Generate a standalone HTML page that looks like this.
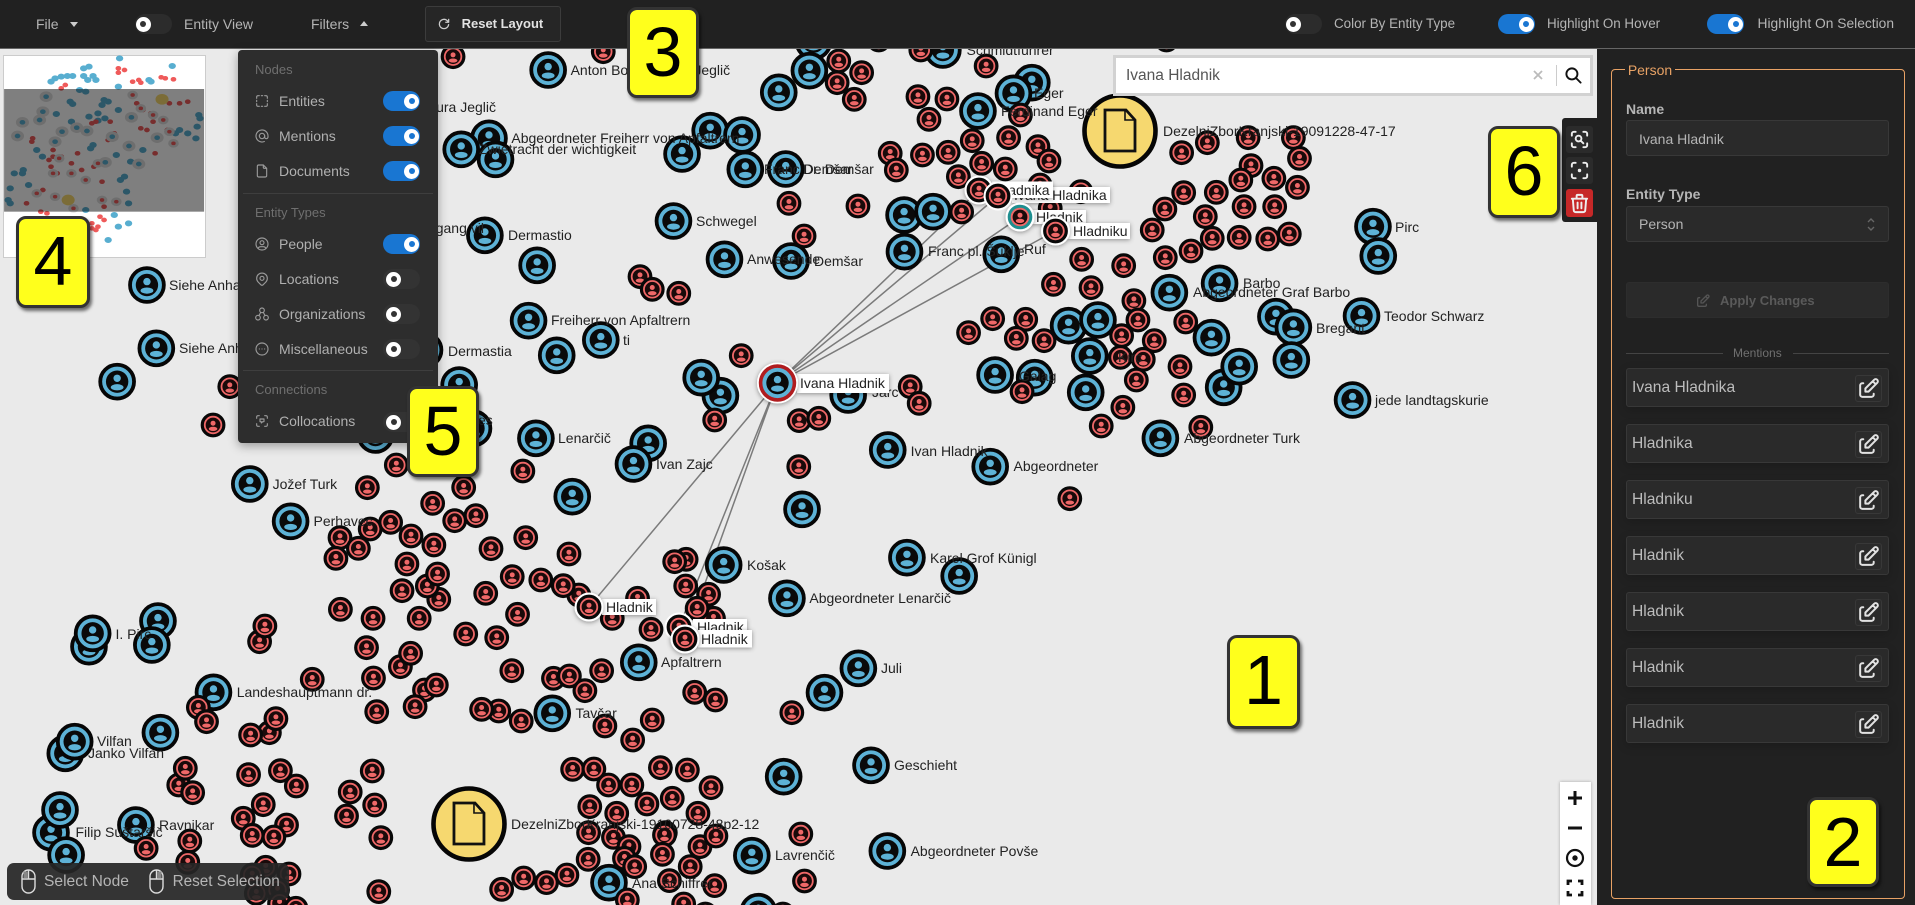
<!DOCTYPE html>
<html><head><meta charset="utf-8"><title>Graph</title>
<style>
*{box-sizing:border-box}
html,body{margin:0;padding:0;width:1915px;height:905px;overflow:hidden;background:#eaeaea;font-family:"Liberation Sans",sans-serif}
.a{position:absolute}
.tx{position:absolute;font-size:14px;line-height:16px;color:#b5b5b5;white-space:nowrap}
#tb{left:0;top:0;width:1915px;height:49px;background:#212121;border-bottom:1px solid #666}
.tg{position:absolute;width:37px;height:20px;border-radius:10px;background:#2c2c2c}
#fp .tg{background:#333}
#fp .tg.on{background:#1976d2}
.tg.on{background:#1976d2}
.tg i{position:absolute;top:2.5px;left:0;width:15px;height:15px;border-radius:50%;background:#fff}
.tg.off i{left:3px}
.tg.on i{left:21px}
.tg i:after{content:"";position:absolute;left:4.5px;top:4.5px;width:6px;height:6px;border-radius:50%;background:#333}
.tg.on i:after{background:#1976d2}
.car{position:absolute;width:0;height:0;border-left:4px solid transparent;border-right:4px solid transparent}
#fp{left:238px;top:50px;width:200px;height:393px;background:#2d2d2d;border-radius:4px;box-shadow:0 3px 10px rgba(0,0,0,.35)}
.hd{position:absolute;left:17px;font-size:13px;line-height:16px;color:#6f6f6f}
.rw{position:absolute;left:41px;font-size:14px;line-height:16px;color:#b0b0b0}
.ln{position:absolute;left:5px;width:190px;height:1px;background:#3e3e3e}
.fi{position:absolute;left:16px;width:16px;height:16px;margin-top:1px;fill:none;stroke:#9a9a9a;stroke-width:1.7;stroke-linecap:round;stroke-linejoin:round}
.n{position:absolute;width:72px;height:91px;background:#ffff1c;border:3px solid #333;border-radius:10px;box-shadow:2px 3px 3px rgba(0,0,0,.55);font-size:70px;line-height:85px;text-align:center;color:#000}
#sb{left:1597px;top:49px;width:318px;height:856px;background:#212121}
.lb{position:absolute;left:1626px;font-size:14px;font-weight:bold;line-height:16px;color:#b5b5b5}
.in{position:absolute;left:1626px;width:263px;height:36px;background:#2a2a2a;border:1px solid #383838;border-radius:3px}
.mr{position:absolute;left:1626px;width:263px;height:39px;background:#2a2a2a;border:1px solid #383838;border-radius:3px;box-shadow:0 3px 10px rgba(0,0,0,.18)}
.mr span{position:absolute;left:5px;top:10px;font-size:15.6px;line-height:18px;color:#bdbdbd;white-space:nowrap}
.mr b{position:absolute;right:6px;top:6px;width:27px;height:27px;border:1px solid #383838;border-radius:3px;background:#2b2b2b}
.mr svg{position:absolute;left:0;top:0;width:25px;height:25px;fill:none;stroke:#e2e2e2;stroke-width:1.9;stroke-linecap:round;stroke-linejoin:round}
.ib{position:absolute;left:1566px;width:27px;height:27px;background:#2b2b2b;border-radius:3px}
.ib svg{position:absolute;left:2px;top:2px;width:23px;height:23px;fill:none;stroke:#eee;stroke-width:2;stroke-linecap:round;stroke-linejoin:round}
.z{position:absolute;left:1560px;width:30px;height:30px}
.z svg{position:absolute;left:3px;top:3px;width:24px;height:24px;fill:none;stroke:#111;stroke-width:2.2}
svg text{font-family:"Liberation Sans",sans-serif;font-size:14px;fill:#222}
</style></head><body>

<svg class="a" style="left:0;top:0" width="1597" height="905" viewBox="0 0 1597 905">
<defs>
<g id="b" transform="scale(2.45,3)"><circle r="16.9" fill="#5db2d6" stroke="#060606" stroke-width="3.8"/><circle r="11.2" fill="#0a0a0a"/><circle cy="-3.4" r="3.7" fill="#5db2d6"/><ellipse cy="5.6" rx="6.4" ry="3.1" fill="#5db2d6"/></g>
<g id="r" transform="scale(2.45,3)"><circle r="10.8" fill="#ef6868" stroke="#080808" stroke-width="3.2"/><circle r="7.4" fill="#1a0a0a"/><circle cy="-1.8" r="2.5" fill="#ef6868"/><ellipse cy="3.9" rx="4.3" ry="2.1" fill="#ef6868"/></g>
<g id="dc" transform="scale(2.45,3)"><circle r="35.5" fill="#f6d86f" stroke="#060606" stroke-width="4.6"/><path d="M-15 -21H6L15 -11V20H-15Z" fill="none" stroke="#111" stroke-width="2.8"/><path d="M5 -21V-11H15" fill="none" stroke="#111" stroke-width="1.6"/></g>
<filter id="sh" x="-30%" y="-40%" width="160%" height="180%"><feDropShadow dx="0" dy="1" stdDeviation="2.5" flood-color="#000" flood-opacity=".4"/></filter>
</defs>
<rect width="1597" height="905" fill="#eaeaea"/>
<g stroke="#7b7b7b" stroke-width="1.5" fill="none">
<path d="M777 383L979 190M777 383L998 196M777 383L1020 217M777 383L1055 231M777 383L589 607M777 383L679 627M777 383L685 639"/>
</g>

<!-- crop 1 -->
<g transform="scale(.40816,.33333)">
<use href="#b" x="1343" y="210"/><use href="#b" x="1198" y="415"/><use href="#b" x="1130" y="448"/><use href="#b" x="1214" y="478"/>
<use href="#b" x="1188" y="706"/><use href="#b" x="1316" y="796"/><use href="#b" x="360" y="855"/><use href="#b" x="383" y="1045"/><use href="#b" x="287" y="1145"/>
<use href="#b" x="1295" y="962"/><use href="#b" x="1472" y="1020"/><use href="#b" x="1364" y="1066"/><use href="#b" x="1040" y="1050"/><use href="#b" x="1125" y="1155"/><use href="#b" x="1160" y="1285"/><use href="#b" x="920" y="1305"/><use href="#b" x="1313" y="1315"/>
<use href="#r" x="1110" y="170"/><use href="#r" x="1478" y="155"/><use href="#r" x="563" y="1160"/><use href="#r" x="522" y="1275"/>
</g>
<!-- crop 3 -->
<g transform="translate(640,0) scale(.40816,.33333)">
<use href="#b" x="425" y="125"/><use href="#b" x="415" y="212"/><use href="#b" x="340" y="277"/><use href="#b" x="742" y="150"/><use href="#b" x="172" y="392"/><use href="#b" x="250" y="405"/><use href="#b" x="103" y="462"/><use href="#b" x="258" y="508"/><use href="#b" x="357" y="507"/><use href="#b" x="82" y="663"/><use href="#b" x="207" y="778"/><use href="#b" x="370" y="783"/><use href="#b" x="647" y="645"/><use href="#b" x="718" y="635"/><use href="#b" x="648" y="755"/><use href="#b" x="885" y="763"/><use href="#b" x="828" y="333"/><use href="#b" x="960" y="248"/><use href="#b" x="915" y="280"/><use href="#b" x="1297" y="878"/><use href="#b" x="1420" y="850"/><use href="#b" x="1050" y="977"/><use href="#b" x="1122" y="960"/><use href="#b" x="1102" y="1068"/><use href="#b" x="1400" y="1013"/><use href="#b" x="1430" y="1162"/><use href="#b" x="1468" y="1100"/><use href="#b" x="1558" y="950"/><use href="#b" x="870" y="1125"/><use href="#b" x="967" y="1133"/><use href="#b" x="1092" y="1177"/><use href="#b" x="197" y="1187"/><use href="#b" x="150" y="1133"/><use href="#b" x="510" y="1185"/><use href="#b" x="20" y="1330"/><use href="#b" x="607" y="1350"/><use href="#b" x="1275" y="1315"/>
<use href="#r" x="585" y="120"/><use href="#r" x="1290" y="120"/>
<use href="#r" x="487" y="183"/><use href="#r" x="543" y="218"/><use href="#r" x="483" y="248"/><use href="#r" x="525" y="298"/><use href="#r" x="688" y="150"/><use href="#r" x="848" y="198"/><use href="#r" x="681" y="290"/><use href="#r" x="752" y="297"/><use href="#r" x="708" y="358"/><use href="#r" x="814" y="422"/><use href="#r" x="903" y="413"/><use href="#r" x="932" y="345"/><use href="#r" x="975" y="440"/><use href="#r" x="1002" y="483"/><use href="#r" x="613" y="460"/><use href="#r" x="628" y="510"/><use href="#r" x="692" y="465"/><use href="#r" x="755" y="457"/><use href="#r" x="837" y="490"/><use href="#r" x="895" y="507"/><use href="#r" x="780" y="530"/><use href="#r" x="980" y="555"/><use href="#r" x="1080" y="575"/><use href="#r" x="1005" y="625"/><use href="#r" x="365" y="610"/><use href="#r" x="534" y="618"/><use href="#r" x="788" y="636"/><use href="#r" x="402" y="708"/><use href="#r" x="0" y="830"/><use href="#r" x="30" y="868"/><use href="#r" x="95" y="880"/>
<use href="#r" x="1327" y="458"/><use href="#r" x="1390" y="428"/><use href="#r" x="1490" y="413"/><use href="#r" x="1497" y="497"/><use href="#r" x="1472" y="540"/><use href="#r" x="1553" y="535"/><use href="#r" x="1332" y="578"/><use href="#r" x="1412" y="577"/><use href="#r" x="1286" y="627"/><use href="#r" x="1385" y="650"/><use href="#r" x="1480" y="620"/><use href="#r" x="1555" y="620"/><use href="#r" x="1255" y="690"/><use href="#r" x="1402" y="715"/><use href="#r" x="1468" y="712"/><use href="#r" x="1538" y="717"/><use href="#r" x="1287" y="773"/><use href="#r" x="1350" y="753"/><use href="#r" x="1082" y="778"/><use href="#r" x="1185" y="797"/><use href="#r" x="1013" y="853"/><use href="#r" x="1105" y="863"/><use href="#r" x="1210" y="902"/><use href="#r" x="1220" y="960"/><use href="#r" x="1337" y="966"/><use href="#r" x="1180" y="1007"/><use href="#r" x="1260" y="1022"/><use href="#r" x="864" y="956"/><use href="#r" x="945" y="958"/><use href="#r" x="805" y="998"/><use href="#r" x="922" y="1015"/><use href="#r" x="990" y="1022"/><use href="#r" x="1177" y="1072"/><use href="#r" x="1233" y="1078"/><use href="#r" x="1323" y="1100"/><use href="#r" x="1216" y="1140"/><use href="#r" x="936" y="1175"/><use href="#r" x="1332" y="1185"/><use href="#r" x="1183" y="1222"/><use href="#r" x="1130" y="1278"/><use href="#r" x="1374" y="1282"/><use href="#r" x="248" y="1067"/><use href="#r" x="183" y="1260"/><use href="#r" x="390" y="1262"/><use href="#r" x="438" y="1255"/><use href="#r" x="662" y="1160"/><use href="#r" x="684" y="1210"/>
<use href="#dc" x="1176" y="393"/>
</g>
<!-- crop 2 -->
<g transform="translate(1275,0) scale(.40816,.33333)">
<use href="#b" x="240" y="680"/><use href="#b" x="253" y="768"/><use href="#b" x="45" y="982"/><use href="#b" x="212" y="948"/><use href="#b" x="40" y="1080"/><use href="#b" x="190" y="1200"/>
<use href="#r" x="45" y="413"/><use href="#r" x="60" y="475"/><use href="#r" x="55" y="562"/><use href="#r" x="35" y="702"/>
</g>
<!-- crop 4 -->
<g transform="translate(0,450) scale(.40816,.33333)">
<use href="#b" x="1552" y="42"/><use href="#b" x="612" y="102"/><use href="#b" x="712" y="214"/><use href="#b" x="1402" y="140"/><use href="#b" x="218" y="590"/><use href="#b" x="227" y="550"/><use href="#b" x="387" y="513"/><use href="#b" x="372" y="585"/><use href="#b" x="523" y="727"/><use href="#b" x="393" y="848"/><use href="#b" x="160" y="910"/><use href="#b" x="183" y="875"/><use href="#b" x="125" y="1148"/><use href="#b" x="147" y="1080"/><use href="#b" x="333" y="1125"/><use href="#b" x="162" y="1215"/><use href="#b" x="1353" y="790"/><use href="#b" x="1565" y="637"/><use href="#b" x="1492" y="1298"/>
<use href="#r" x="971" y="45"/><use href="#r" x="900" y="113"/><use href="#r" x="1136" y="112"/><use href="#r" x="1281" y="63"/><use href="#r" x="1060" y="160"/><use href="#r" x="1114" y="212"/><use href="#r" x="1166" y="197"/><use href="#r" x="907" y="237"/><use href="#r" x="957" y="217"/><use href="#r" x="833" y="263"/><use href="#r" x="878" y="295"/><use href="#r" x="823" y="325"/><use href="#r" x="1007" y="258"/><use href="#r" x="1063" y="285"/><use href="#r" x="997" y="342"/><use href="#r" x="1075" y="448"/><use href="#r" x="1047" y="408"/><use href="#r" x="1072" y="372"/><use href="#r" x="985" y="422"/><use href="#r" x="1203" y="296"/><use href="#r" x="1288" y="263"/><use href="#r" x="1394" y="312"/><use href="#r" x="1255" y="380"/><use href="#r" x="1325" y="390"/><use href="#r" x="1418" y="435"/><use href="#r" x="1380" y="407"/><use href="#r" x="1190" y="430"/><use href="#r" x="1268" y="493"/><use href="#r" x="834" y="478"/><use href="#r" x="914" y="505"/><use href="#r" x="1027" y="505"/><use href="#r" x="1141" y="552"/><use href="#r" x="1217" y="563"/><use href="#r" x="1500" y="505"/><use href="#r" x="1562" y="445"/>
<use href="#r" x="636" y="575"/><use href="#r" x="649" y="528"/><use href="#r" x="898" y="593"/><use href="#r" x="981" y="650"/><use href="#r" x="1006" y="610"/><use href="#r" x="765" y="688"/><use href="#r" x="915" y="684"/><use href="#r" x="1254" y="662"/><use href="#r" x="1356" y="685"/><use href="#r" x="1395" y="678"/><use href="#r" x="1474" y="662"/><use href="#r" x="1433" y="722"/><use href="#r" x="1040" y="720"/><use href="#r" x="1069" y="705"/><use href="#r" x="1017" y="770"/><use href="#r" x="923" y="785"/><use href="#r" x="1222" y="783"/><use href="#r" x="1180" y="778"/><use href="#r" x="1277" y="813"/><use href="#r" x="1482" y="828"/><use href="#r" x="1550" y="870"/><use href="#r" x="486" y="772"/><use href="#r" x="506" y="815"/><use href="#r" x="660" y="848"/><use href="#r" x="676" y="806"/><use href="#r" x="614" y="855"/><use href="#r" x="438" y="1005"/><use href="#r" x="454" y="955"/><use href="#r" x="472" y="1028"/><use href="#r" x="609" y="974"/><use href="#r" x="687" y="962"/><use href="#r" x="726" y="1008"/><use href="#r" x="912" y="963"/><use href="#r" x="858" y="1026"/><use href="#r" x="918" y="1065"/><use href="#r" x="849" y="1098"/><use href="#r" x="933" y="1163"/><use href="#r" x="645" y="1064"/><use href="#r" x="596" y="1105"/><use href="#r" x="702" y="1125"/><use href="#r" x="618" y="1156"/><use href="#r" x="671" y="1161"/><use href="#r" x="465" y="1173"/><use href="#r" x="358" y="1195"/><use href="#r" x="460" y="1237"/><use href="#r" x="651" y="1252"/><use href="#r" x="708" y="1272"/><use href="#r" x="618" y="1275"/><use href="#r" x="628" y="1330"/><use href="#r" x="680" y="1320"/><use href="#r" x="685" y="1360"/><use href="#r" x="725" y="1375"/><use href="#r" x="928" y="1325"/><use href="#r" x="1403" y="958"/><use href="#r" x="1455" y="957"/><use href="#r" x="1491" y="1005"/><use href="#r" x="1548" y="1005"/><use href="#r" x="1445" y="1070"/><use href="#r" x="1511" y="1090"/><use href="#r" x="1442" y="1148"/><use href="#r" x="1503" y="1162"/><use href="#r" x="1541" y="1190"/><use href="#r" x="1530" y="1225"/><use href="#r" x="1555" y="1250"/><use href="#r" x="1441" y="1228"/><use href="#r" x="1389" y="1275"/><use href="#r" x="1283" y="1284"/><use href="#r" x="1339" y="1298"/><use href="#r" x="1229" y="1318"/><use href="#r" x="1537" y="1350"/>
<use href="#dc" x="1149" y="1122"/>
</g>
<!-- crop 5 -->
<g transform="translate(640,450) scale(.40816,.33333)">
<use href="#b" x="858" y="50"/><use href="#b" x="397" y="178"/><use href="#b" x="205" y="345"/><use href="#b" x="654" y="323"/><use href="#b" x="782" y="378"/><use href="#b" x="360" y="445"/><use href="#b" x="535" y="655"/><use href="#b" x="452" y="728"/><use href="#b" x="566" y="946"/><use href="#b" x="352" y="980"/><use href="#b" x="606" y="1203"/><use href="#b" x="274" y="1217"/><use href="#b" x="290" y="1385"/>
<use href="#r" x="389" y="50"/><use href="#r" x="1053" y="146"/><use href="#r" x="113" y="328"/><use href="#r" x="85" y="335"/><use href="#r" x="112" y="408"/><use href="#r" x="168" y="433"/><use href="#r" x="180" y="505"/><use href="#r" x="140" y="475"/><use href="#r" x="27" y="538"/><use href="#r" x="134" y="727"/><use href="#r" x="185" y="750"/><use href="#r" x="372" y="788"/><use href="#r" x="30" y="810"/><use href="#r" x="50" y="953"/><use href="#r" x="116" y="960"/><use href="#r" x="174" y="1013"/><use href="#r" x="79" y="1045"/><use href="#r" x="17" y="1062"/><use href="#r" x="142" y="1090"/><use href="#r" x="62" y="1148"/><use href="#r" x="60" y="1155"/><use href="#r" x="147" y="1190"/><use href="#r" x="186" y="1158"/><use href="#r" x="55" y="1213"/><use href="#r" x="123" y="1250"/><use href="#r" x="72" y="1292"/><use href="#r" x="183" y="1307"/><use href="#r" x="394" y="1152"/><use href="#r" x="403" y="1293"/><use href="#r" x="107" y="1362"/><use href="#r" x="160" y="1392"/><use href="#r" x="350" y="1392"/>
</g>

<!-- labels -->
<g>
<text x="570.6" y="75">Anton Bonaventura Jeglič</text>
<text x="496" y="112" text-anchor="end">Bonaventura Jeglič</text>
<text x="511.4" y="143">Abgeordneter Freiherr von Apfaltrern</text>
<text x="479" y="154">Zwietracht der wichtigkeit</text>
<text x="484" y="233" text-anchor="end">Wolfgang vil</text>
<text x="508" y="240">Dermastio</text>
<text x="169" y="290">Siehe Anhang</text>
<text x="179" y="353">Siehe Anhang</text>
<text x="551" y="325">Freiherr von Apfaltrern</text>
<text x="623" y="345">ti</text>
<text x="448" y="356">Dermastia</text>
<text x="558" y="443">Lenarčič</text>
<text x="478" y="425">es</text>
<text x="966.5" y="55">Schmidtführer</text>
<text x="764" y="174">Franc Demšar</text>
<text x="803" y="174">Dr. Demšar</text>
<text x="696" y="226">Schwegel</text>
<text x="747" y="264">Anwesende</text>
<text x="814" y="266">Demšar</text>
<text x="928" y="256">Franc pl. Šuklje</text>
<text x="1024" y="254">Ruf</text>
<text x="1001" y="116">Ferdinand Eger</text>
<text x="1034" y="98">Eger</text>
<text x="1163" y="136">DezelniZborKranjski-19091228-47-17</text>
<text x="1243" y="288">Barbo</text>
<text x="1193" y="297">Abgeordneter Graf Barbo</text>
<text x="1184" y="443">Abgeordneter Turk</text>
<text x="910.6" y="456">Ivan Hladnik</text>
<text x="872" y="397">Jarc</text>
<text x="1019" y="381">Galag</text>
<text x="1118" y="362">Kirc</text>
<text x="1395" y="232">Pirc</text>
<text x="1384" y="321">Teodor Schwarz</text>
<text x="1316" y="333">Bregant</text>
<text x="1375" y="405">jede landtagskurie</text>
<text x="272.6" y="489">Jožef Turk</text>
<text x="313.5" y="526">Perhavec</text>
<text x="115.5" y="639">I. Pirc</text>
<text x="236.7" y="697">Landeshauptmann dr.</text>
<text x="575.5" y="718">Tavčar</text>
<text x="97" y="746">Vilfan</text>
<text x="88" y="758">Janko Vilfan</text>
<text x="159" y="830">Ravnikar</text>
<text x="75.5" y="837">Filip Suštaršič</text>
<text x="511" y="829">DezelniZborKranjski-19100728-48p2-12</text>
<text x="632" y="888">Ana Schiffrer</text>
<text x="656" y="469">Ivan Zajc</text>
<text x="1013.5" y="471">Abgeordneter</text>
<text x="747" y="570">Košak</text>
<text x="930" y="563">Karel Grof Künigl</text>
<text x="809.4" y="603">Abgeordneter Lenarčič</text>
<text x="661" y="667">Apfaltrern</text>
<text x="881" y="673">Juli</text>
<text x="894" y="770">Geschieht</text>
<text x="910.6" y="856">Abgeordneter Povše</text>
<text x="775" y="860">Lavrenčič</text>
</g>

<!-- highlighted -->
<g>
<rect x="1012" y="187" width="98" height="16" fill="#fff" filter="url(#sh)"/><text x="1014" y="200">Ivana Hladnika</text>
<rect x="992" y="181.5" width="61" height="16.5" fill="#fff" filter="url(#sh)"/><text x="995" y="195">Hladnika</text>
<circle cx="979" cy="190" r="14.5" fill="#fff" filter="url(#sh)"/>
<g transform="translate(979,190)"><circle r="10.8" fill="#ef6868" stroke="#080808" stroke-width="3.2"/><circle r="7.4" fill="#1a0a0a"/><circle cy="-1.8" r="2.5" fill="#ef6868"/><ellipse cy="3.9" rx="4.3" ry="2.1" fill="#ef6868"/></g>
<circle cx="998" cy="196" r="14.5" fill="#fff"/>
<g transform="translate(998,196)"><circle r="10.8" fill="#ef6868" stroke="#080808" stroke-width="3.2"/><circle r="7.4" fill="#1a0a0a"/><circle cy="-1.8" r="2.5" fill="#ef6868"/><ellipse cy="3.9" rx="4.3" ry="2.1" fill="#ef6868"/></g>

<rect x="1032" y="210" width="54" height="14" fill="#fff" filter="url(#sh)"/><text x="1036" y="222">Hladnik</text>
<circle cx="1020" cy="217" r="14.5" fill="#fff" filter="url(#sh)"/>
<g transform="translate(1020,217)"><circle r="10.8" fill="#ef6868" stroke="#1f8f90" stroke-width="3"/><circle r="7.4" fill="#1a0a0a"/><circle cy="-1.8" r="2.5" fill="#ef6868"/><ellipse cy="3.9" rx="4.3" ry="2.1" fill="#ef6868"/></g>

<rect x="1068" y="223" width="62" height="16" fill="#fff" filter="url(#sh)"/><text x="1073" y="236">Hladniku</text>
<circle cx="1055.5" cy="231" r="14.5" fill="#fff" filter="url(#sh)"/>
<g transform="translate(1055.5,231)"><circle r="10.8" fill="#ef6868" stroke="#080808" stroke-width="3.2"/><circle r="7.4" fill="#1a0a0a"/><circle cy="-1.8" r="2.5" fill="#ef6868"/><ellipse cy="3.9" rx="4.3" ry="2.1" fill="#ef6868"/></g>

<rect x="602" y="599" width="54" height="16" fill="#fff" filter="url(#sh)"/><text x="606" y="612">Hladnik</text>
<circle cx="589" cy="607" r="14.5" fill="#fff" filter="url(#sh)"/>
<g transform="translate(589,607)"><circle r="10.8" fill="#ef6868" stroke="#080808" stroke-width="3.2"/><circle r="7.4" fill="#1a0a0a"/><circle cy="-1.8" r="2.5" fill="#ef6868"/><ellipse cy="3.9" rx="4.3" ry="2.1" fill="#ef6868"/></g>

<rect x="693" y="619" width="54" height="14" fill="#fff" filter="url(#sh)"/><text x="697" y="632">Hladnik</text>
<circle cx="679" cy="627" r="14.5" fill="#fff"/>
<g transform="translate(679,627)"><circle r="10.8" fill="#ef6868" stroke="#080808" stroke-width="3.2"/><circle r="7.4" fill="#1a0a0a"/><circle cy="-1.8" r="2.5" fill="#ef6868"/><ellipse cy="3.9" rx="4.3" ry="2.1" fill="#ef6868"/></g>

<rect x="698" y="630" width="54" height="17.5" fill="#fff" filter="url(#sh)"/><text x="701" y="644">Hladnik</text>
<circle cx="685" cy="639" r="14.5" fill="#fff" filter="url(#sh)"/>
<g transform="translate(685,639)"><circle r="10.8" fill="#ef6868" stroke="#080808" stroke-width="3.2"/><circle r="7.4" fill="#1a0a0a"/><circle cy="-1.8" r="2.5" fill="#ef6868"/><ellipse cy="3.9" rx="4.3" ry="2.1" fill="#ef6868"/></g>

<rect x="797" y="374" width="92" height="19" fill="#fff" filter="url(#sh)"/><text x="800" y="388">Ivana Hladnik</text>
<circle cx="777.5" cy="383" r="20.5" fill="#fff" filter="url(#sh)"/>
<g transform="translate(777.5,383)"><circle r="16.9" fill="#5db2d6" stroke="#b01c1f" stroke-width="3.6"/><circle r="11.2" fill="#0a0a0a"/><circle cy="-3.4" r="3.7" fill="#5db2d6"/><ellipse cy="5.6" rx="6.4" ry="3.1" fill="#5db2d6"/></g>
</g>
</svg>

<!-- minimap -->
<div class="a" style="left:3px;top:55px;width:203px;height:203px;background:#fff;border:1px solid #ccc"></div>
<svg class="a" style="left:0;top:0" width="210" height="260" viewBox="0 0 210 260">
<g transform="scale(.40816,.33333)" fill="none" stroke-linecap="round">
<path stroke="#58aed0" stroke-width="18" d="M125 245h0M135 235h0M150 230h0M165 228h0M178 228h0M205 205h0M218 200h0M205 228h0M215 240h0M228 228h0M235 240h0M293 175h0M422 198h0M290 260h0M370 245h0M365 240h0M265 305h0M255 300h0M250 315h0M172 305h0M178 312h0M240 340h0M175 365h0M138 342h0M240 362h0M257 355h0M290 330h0M210 275h0M195 270h0M218 350h0M228 435h0M222 445h0M104 470h0M90 450h0M35 520h0M55 520h0M57 510h0M25 565h0M20 600h0M25 610h0M70 555h0M310 575h0M295 540h0M305 530h0M285 465h0M350 450h0M320 485h0M430 400h0M460 400h0M487 345h0M490 355h0M483 380h0M480 415h0M440 390h0M290 680h0M315 670h0M265 720h0M315 610h0M210 630h0M280 645h0"/>
<path stroke="#ef5a5a" stroke-width="14" d="M290 205h0M305 210h0M290 218h0M325 245h0M340 240h0M345 248h0M395 232h0M405 235h0M425 238h0M160 255h0M150 265h0M80 415h0M78 425h0M235 365h0M225 370h0M270 365h0M230 500h0M130 470h0M120 480h0M150 470h0M175 490h0M190 460h0M140 520h0M175 520h0M125 500h0M210 540h0M245 490h0M250 545h0M245 600h0M255 620h0M90 580h0M105 570h0M65 610h0M135 590h0M180 625h0M285 605h0M240 680h0M225 670h0M235 690h0M245 650h0M255 660h0M225 685h0M100 635h0M115 640h0M350 330h0M370 340h0M335 310h0M345 385h0M360 390h0M375 365h0M400 360h0M420 430h0M440 310h0M460 305h0M415 310h0M410 390h0M380 460h0M280 400h0M265 420h0M200 510h0M130 450h0"/>
<path stroke="#ddd" stroke-width="32" d="M113 290h0M105 335h0M55 367h0M97 360h0M43 408h0M135 425h0M152 395h0M188 383h0M213 393h0M322 352h0M275 410h0M316 438h0M340 492h0M258 487h0M385 413h0"/>
<path stroke="#ddd" stroke-width="26" d="M325 285h0M345 325h0M375 345h0M400 360h0M415 395h0M425 430h0M145 475h0M130 520h0M175 520h0M210 540h0M240 490h0M90 580h0M135 590h0M250 600h0M285 605h0M180 625h0"/>
<path stroke="#58aed0" stroke-width="14" d="M113 290h0M105 335h0M55 367h0M97 360h0M43 408h0M135 425h0M152 395h0M188 383h0M213 393h0M322 352h0M275 410h0M316 438h0M340 492h0M258 487h0M385 413h0"/>
<path stroke="#ef5a5a" stroke-width="11" d="M325 285h0M345 325h0M375 345h0M400 360h0M415 395h0M425 430h0M145 475h0M130 520h0M175 520h0M210 540h0M240 490h0M90 580h0M135 590h0M250 600h0M285 605h0M180 625h0"/>
<path stroke="#f6d86f" stroke-width="32" d="M397 298h0M167 600h0"/>
<rect x="10" y="267" width="490" height="368" fill="#000" fill-opacity=".5" stroke="none"/>
</g>
</svg>

<!-- toolbar -->
<div id="tb" class="a">
<div class="tx" style="left:36px;top:16px">File</div><div class="car" style="left:69.5px;top:22px;border-top:5px solid #ccc"></div>
<div class="tg off" style="left:135px;top:14px"><i style="left:0.5px"></i></div>
<div class="tx" style="left:184px;top:16px">Entity View</div>
<div class="tx" style="left:311px;top:16px">Filters</div><div class="car" style="left:360px;top:21px;border-bottom:5px solid #ccc"></div>
<div class="a" style="left:424.5px;top:6px;width:136px;height:36px;background:#262626;border:1px solid #3c3c3c;border-radius:3px"></div>
<svg class="a" style="left:437px;top:17px" width="14" height="14" viewBox="0 0 24 24" fill="none" stroke="#ccc" stroke-width="2.2" stroke-linecap="round" stroke-linejoin="round"><path d="M19.933 13.041a8 8 0 1 1 -9.925 -8.788c3.899 -1 7.935 1.007 9.425 4.747M20 4v5h-5"/></svg>
<div class="tx" style="left:461.6px;top:16px;font-size:13px;font-weight:bold;color:#e2e2e2">Reset Layout</div>
<div class="tg off" style="left:1285px;top:14px"><i style="left:0.5px"></i></div>
<div class="tx" style="left:1334px;top:16px;font-size:13.4px">Color By Entity Type</div>
<div class="tg on" style="left:1497.5px;top:14px"><i></i></div>
<div class="tx" style="left:1547px;top:16px;font-size:13.4px">Highlight On Hover</div>
<div class="tg on" style="left:1707px;top:14px"><i></i></div>
<div class="tx" style="left:1757.5px;top:16px;font-size:13.8px">Highlight On Selection</div>
</div>

<!-- filter panel -->
<div id="fp" class="a">
<div class="hd" style="top:12px">Nodes</div>
<svg class="fi" style="top:42px" viewBox="0 0 24 24"><path d="M4 8v-2a2 2 0 0 1 2-2h2M4 16v2a2 2 0 0 0 2 2h2M16 4h2a2 2 0 0 1 2 2v2M16 20h2a2 2 0 0 0 2-2v-2M4 11v2M20 11v2M11 4h2M11 20h2"/></svg>
<div class="rw" style="top:43px">Entities</div><div class="tg on" style="left:145px;top:41px"><i></i></div>
<svg class="fi" style="top:77px" viewBox="0 0 24 24"><circle cx="12" cy="12" r="4"/><path d="M16 12v1.5a2.5 2.5 0 0 0 5 0v-1.5a9 9 0 1 0-5.5 8.28"/></svg>
<div class="rw" style="top:78px">Mentions</div><div class="tg on" style="left:145px;top:76px"><i></i></div>
<svg class="fi" style="top:112px" viewBox="0 0 24 24"><path d="M14 3v4a1 1 0 0 0 1 1h4M17 21h-10a2 2 0 0 1-2-2v-14a2 2 0 0 1 2-2h7l5 5v11a2 2 0 0 1-2 2z"/></svg>
<div class="rw" style="top:113px">Documents</div><div class="tg on" style="left:145px;top:111px"><i></i></div>
<div class="ln" style="top:143px"></div>
<div class="hd" style="top:155px">Entity Types</div>
<svg class="fi" style="top:185px" viewBox="0 0 24 24"><circle cx="12" cy="12" r="9"/><circle cx="12" cy="10" r="3"/><path d="M6.2 18.5a4 4 0 0 1 3.8-2.5h4a4 4 0 0 1 3.8 2.5"/></svg>
<div class="rw" style="top:186px">People</div><div class="tg on" style="left:145px;top:184px"><i></i></div>
<svg class="fi" style="top:220px" viewBox="0 0 24 24"><circle cx="12" cy="11" r="3"/><path d="M17.66 16.66L13.41 20.9a2 2 0 0 1-2.83 0L6.34 16.66a8 8 0 1 1 11.32 0z"/></svg>
<div class="rw" style="top:221px">Locations</div><div class="tg off" style="left:145px;top:219px"><i></i></div>
<svg class="fi" style="top:255px" viewBox="0 0 24 24"><circle cx="12" cy="6.5" r="3.5"/><circle cx="6" cy="17.5" r="3.5"/><circle cx="18" cy="17.5" r="3.5"/><path d="M10 9.5l-2.5 5M14 9.5l2.5 5"/></svg>
<div class="rw" style="top:256px">Organizations</div><div class="tg off" style="left:145px;top:254px"><i></i></div>
<svg class="fi" style="top:290px" viewBox="0 0 24 24"><circle cx="12" cy="12" r="9"/><path d="M8 12h.01M12 12h.01M16 12h.01"/></svg>
<div class="rw" style="top:291px">Miscellaneous</div><div class="tg off" style="left:145px;top:289px"><i></i></div>
<div class="ln" style="top:320px"></div>
<div class="hd" style="top:332px">Connections</div>
<svg class="fi" style="top:362px" viewBox="0 0 24 24"><path d="M4 8v-2a2 2 0 0 1 2-2h2M4 16v2a2 2 0 0 0 2 2h2M16 4h2a2 2 0 0 1 2 2v2M16 20h2a2 2 0 0 0 2-2v-2M9 9h6v4h-2l-2 2v-2h-2z"/></svg>
<div class="rw" style="top:363px">Collocations</div><div class="tg off" style="left:145px;top:362px"><i></i></div>
</div>

<!-- search -->
<div class="a" style="left:1113px;top:55px;width:480px;height:41px;background:#fff;border:3px solid #d2d2d2"></div>
<div class="tx" style="left:1126px;top:67px;font-size:15.5px;line-height:18px;color:#555">Ivana Hladnik</div>
<svg class="a" style="left:1532px;top:69px" width="12" height="12" viewBox="0 0 12 12" stroke="#bbb" stroke-width="1.8"><path d="M2 2l8 8M10 2l-8 8"/></svg>
<div class="a" style="left:1556px;top:65px;width:1px;height:21px;background:#ccc"></div>
<svg class="a" style="left:1564px;top:66px" width="19" height="19" viewBox="0 0 24 24" fill="none" stroke="#111" stroke-width="2.4" stroke-linecap="round"><path d="M10 10m-7 0a7 7 0 1 0 14 0a7 7 0 1 0-14 0M21 21l-6-6"/></svg>

<!-- right icon strip -->
<div class="a" style="left:1561.5px;top:118px;width:36px;height:104px;background:#212121;border-radius:3px 0 0 3px"></div>
<div class="ib" style="top:126px"><svg viewBox="0 0 24 24"><path d="M4 8v-2a2 2 0 0 1 2-2h2M4 16v2a2 2 0 0 0 2 2h2M16 4h2a2 2 0 0 1 2 2v2M16 20h2a2 2 0 0 0 2-2v-2M8 11a3 3 0 1 0 6 0a3 3 0 0 0-6 0M16 16l-2.5-2.5"/></svg></div>
<div class="ib" style="top:157px"><svg viewBox="0 0 24 24"><path d="M4 8v-2a2 2 0 0 1 2-2h2M4 16v2a2 2 0 0 0 2 2h2M16 4h2a2 2 0 0 1 2 2v2M16 20h2a2 2 0 0 0 2-2v-2"/><circle cx="12" cy="12" r=".8" fill="#eee"/></svg></div>
<div class="ib" style="top:189px;height:28px;background:#c62828"><svg viewBox="0 0 24 24" style="top:3px"><path d="M4 7h16M10 11v6M14 11v6M5 7l1 12a2 2 0 0 0 2 2h8a2 2 0 0 0 2-2l1-12M9 7v-3a1 1 0 0 1 1-1h4a1 1 0 0 1 1 1v3"/></svg></div>

<!-- zoom controls -->
<div class="a" style="left:1559.5px;top:782px;width:31px;height:123px;background:#fff;box-shadow:0 0 3px rgba(0,0,0,.3)"></div>
<div class="z" style="top:783px"><svg viewBox="0 0 24 24" style="stroke-width:3"><path d="M5 12h14M12 5v14"/></svg></div>
<div class="z" style="top:813px"><svg viewBox="0 0 24 24" style="stroke-width:3"><path d="M5 12h14"/></svg></div>
<div class="z" style="top:843px"><svg viewBox="0 0 24 24"><circle cx="12" cy="12" r="8"/><circle cx="12" cy="12" r="1.6" fill="#111"/></svg></div>
<div class="z" style="top:873px"><svg viewBox="0 0 24 24" style="stroke-width:2.8"><path d="M5 9V5h4M15 5h4v4M5 15v4h4M15 19h4v-4"/></svg></div>

<!-- bottom-left hint -->
<div class="a" style="left:7px;top:863px;width:282px;height:37px;background:rgba(38,38,38,.93);border-radius:7px"></div>
<svg class="a" style="left:21px;top:869px" width="15" height="25" viewBox="0 0 15 25" fill="none" stroke="#ddd" stroke-width="1.4"><rect x="1" y="1" width="13" height="23" rx="6.5"/><path d="M1 10h13M7.5 1v9"/><rect x="2.5" y="2.5" width="4" height="7" fill="#888" stroke="none"/></svg>
<div class="tx" style="left:44px;top:873px;font-size:15.6px;line-height:18px">Select Node</div>
<svg class="a" style="left:149px;top:869px" width="15" height="25" viewBox="0 0 15 25" fill="none" stroke="#ddd" stroke-width="1.4"><rect x="1" y="1" width="13" height="23" rx="6.5"/><path d="M1 10h13M7.5 1v9"/><rect x="8.5" y="2.5" width="4" height="7" fill="#888" stroke="none"/></svg>
<div class="tx" style="left:172.6px;top:873px;font-size:15.3px;line-height:18px">Reset Selection</div>

<!-- sidebar -->
<div id="sb" class="a"></div>
<div class="a" style="left:1610.5px;top:69px;width:294px;height:830px;border:1px solid #e8a265;border-radius:4px"></div>
<div class="a" style="left:1625px;top:62px;width:50px;height:16px;background:#212121;text-align:center;font-size:14px;line-height:16px;color:#e8a265">Person</div>
<div class="lb" style="top:101px">Name</div>
<div class="in" style="top:120px"></div>
<div class="tx" style="left:1639px;top:131px">Ivana Hladnik</div>
<div class="lb" style="top:186px">Entity Type</div>
<div class="in" style="top:206px"></div>
<div class="tx" style="left:1639px;top:216px">Person</div>
<svg class="a" style="left:1866px;top:217px" width="10" height="15" viewBox="0 0 10 15" fill="none" stroke="#666" stroke-width="1.4"><path d="M2 5l3-3 3 3M2 10l3 3 3-3"/></svg>
<div class="in" style="top:282px;border-color:#2d2d2d;background:#2a2a2a"></div>
<svg class="a" style="left:1695px;top:293px" width="16" height="16" viewBox="0 0 24 24" fill="none" stroke="#555" stroke-width="2" stroke-linecap="round" stroke-linejoin="round"><path d="M7 7h-1a2 2 0 0 0-2 2v9a2 2 0 0 0 2 2h9a2 2 0 0 0 2-2v-1M20.385 6.585a2.1 2.1 0 0 0-2.97-2.97l-8.415 8.385v3h3l8.385-8.415zM16 5l3 3"/></svg>
<div class="tx" style="left:1720px;top:293px;font-weight:bold;font-size:13px;color:#5a5a5a">Apply Changes</div>
<div class="a" style="left:1626px;top:353px;width:97px;height:1px;background:#444"></div>
<div class="a" style="left:1793px;top:353px;width:96px;height:1px;background:#444"></div>
<div class="tx" style="left:1733px;top:345px;font-size:12px;color:#707070">Mentions</div>

<div class="mr" style="top:368px"><span>Ivana Hladnika</span><b><svg viewBox="0 0 24 24"><path d="M7 7h-1a2 2 0 0 0-2 2v9a2 2 0 0 0 2 2h9a2 2 0 0 0 2-2v-1M20.385 6.585a2.1 2.1 0 0 0-2.97-2.97l-8.415 8.385v3h3l8.385-8.415zM16 5l3 3"/></svg></b></div>
<div class="mr" style="top:424px"><span>Hladnika</span><b><svg viewBox="0 0 24 24"><path d="M7 7h-1a2 2 0 0 0-2 2v9a2 2 0 0 0 2 2h9a2 2 0 0 0 2-2v-1M20.385 6.585a2.1 2.1 0 0 0-2.97-2.97l-8.415 8.385v3h3l8.385-8.415zM16 5l3 3"/></svg></b></div>
<div class="mr" style="top:480px"><span>Hladniku</span><b><svg viewBox="0 0 24 24"><path d="M7 7h-1a2 2 0 0 0-2 2v9a2 2 0 0 0 2 2h9a2 2 0 0 0 2-2v-1M20.385 6.585a2.1 2.1 0 0 0-2.97-2.97l-8.415 8.385v3h3l8.385-8.415zM16 5l3 3"/></svg></b></div>
<div class="mr" style="top:536px"><span>Hladnik</span><b><svg viewBox="0 0 24 24"><path d="M7 7h-1a2 2 0 0 0-2 2v9a2 2 0 0 0 2 2h9a2 2 0 0 0 2-2v-1M20.385 6.585a2.1 2.1 0 0 0-2.97-2.97l-8.415 8.385v3h3l8.385-8.415zM16 5l3 3"/></svg></b></div>
<div class="mr" style="top:592px"><span>Hladnik</span><b><svg viewBox="0 0 24 24"><path d="M7 7h-1a2 2 0 0 0-2 2v9a2 2 0 0 0 2 2h9a2 2 0 0 0 2-2v-1M20.385 6.585a2.1 2.1 0 0 0-2.97-2.97l-8.415 8.385v3h3l8.385-8.415zM16 5l3 3"/></svg></b></div>
<div class="mr" style="top:648px"><span>Hladnik</span><b><svg viewBox="0 0 24 24"><path d="M7 7h-1a2 2 0 0 0-2 2v9a2 2 0 0 0 2 2h9a2 2 0 0 0 2-2v-1M20.385 6.585a2.1 2.1 0 0 0-2.97-2.97l-8.415 8.385v3h3l8.385-8.415zM16 5l3 3"/></svg></b></div>
<div class="mr" style="top:704px"><span>Hladnik</span><b><svg viewBox="0 0 24 24"><path d="M7 7h-1a2 2 0 0 0-2 2v9a2 2 0 0 0 2 2h9a2 2 0 0 0 2-2v-1M20.385 6.585a2.1 2.1 0 0 0-2.97-2.97l-8.415 8.385v3h3l8.385-8.415zM16 5l3 3"/></svg></b></div>

<!-- number callouts -->
<div class="n" style="left:1227px;top:635px;width:73px;height:94px">1</div>
<div class="n" style="left:1807px;top:797px;height:90px">2</div>
<div class="n" style="left:627px;top:7px">3</div>
<div class="n" style="left:16px;top:216px;width:74px;height:92px">4</div>
<div class="n" style="left:407px;top:386px">5</div>
<div class="n" style="left:1488px;top:126px;height:92px">6</div>
</body></html>
